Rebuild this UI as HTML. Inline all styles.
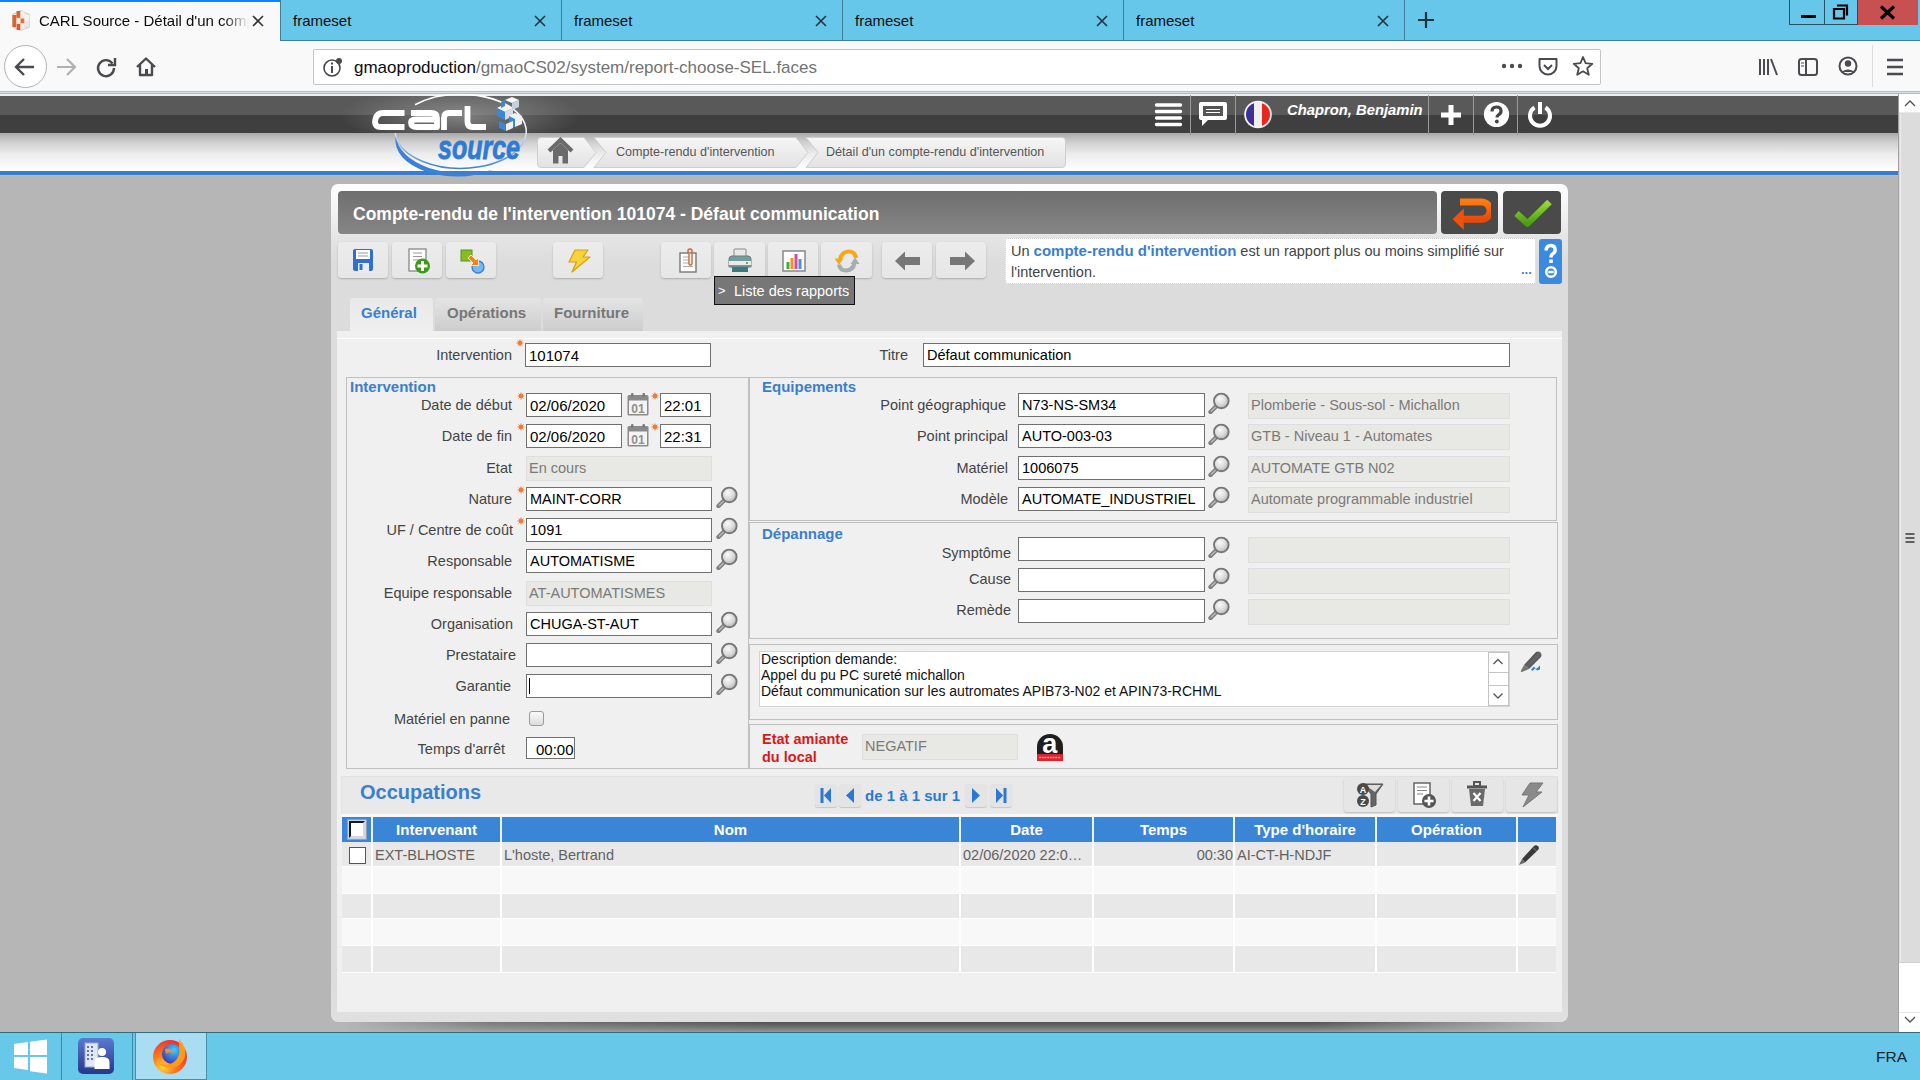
<!DOCTYPE html>
<html><head><meta charset="utf-8">
<style>
*{box-sizing:border-box;margin:0;padding:0}
html,body{width:1920px;height:1080px;overflow:hidden;font-family:"Liberation Sans",sans-serif;background:#b6b6b6;position:relative}
.a{position:absolute}
/* tab bar */
#tabbar{left:0;top:0;width:1920px;height:41px;background:#67c7ea}
.tab{top:0;height:40px;border-left:1px solid #3a8aa8;}
.tabtxt{top:12px;font-size:15px;color:#0c0c0d;white-space:nowrap}
.xclose{width:14px;height:14px}
#toolbar{left:0;top:41px;width:1920px;height:50px;background:#f9f9fa}
.tb{position:absolute;top:242px;height:36px;border-radius:4px;background:linear-gradient(#ececec,#e6e6e6);box-shadow:0 1px 2px rgba(0,0,0,.22)}
.tb svg{position:absolute;left:13px;top:6px}
.lbl{white-space:nowrap;line-height:17px}
.inp{background:#fff;border:1px solid #707070}
.inro{background:#e8e8e4;border:1px solid #dedede}
.intx{white-space:nowrap;color:#000;line-height:17px}
.fs{border:1px solid #c0c0c0}
.legend{font-size:15px;font-weight:bold;color:#3a7fce;line-height:17px}
</style></head>
<body>
<!-- ===== BROWSER CHROME ===== -->
<div id="tabbar" class="a">
  <div class="a" style="left:0;top:40px;width:1920px;height:1px;background:#3d7f99"></div>
  <div class="a" style="left:0;top:0;width:280px;height:41px;background:#f9f9fa"></div>
  <div class="a" style="left:0;top:0;width:280px;height:2px;background:#0a84ff"></div>
  <!-- favicon -->
  <svg class="a" style="left:12px;top:10px" width="18" height="21" viewBox="0 0 18 21">
    <path d="M0.5 4.5L8.5 0.5L17.5 4.5V17L8.5 20.5L0.5 17Z" fill="#f0e6e0" stroke="#c8c0bc" stroke-width=".8"/>
    <rect x="0.5" y="5" width="4" height="6" fill="#e0622a"/><rect x="0.5" y="11" width="4" height="6" fill="#e0622a"/>
    <rect x="4.5" y="1" width="4" height="7" fill="#e0622a"/><rect x="4.5" y="8" width="4" height="6" fill="#f4e8e0"/><rect x="4.5" y="14" width="4" height="6" fill="#e0582a"/>
    <rect x="8.5" y="1.5" width="4" height="7" fill="#f6f2ee"/><rect x="8.5" y="8.5" width="4" height="5" fill="#e2703a"/><rect x="8.5" y="13.5" width="4" height="6" fill="#f2ece8"/>
    <rect x="12.5" y="5" width="5" height="6" fill="#f2f2f2"/><rect x="12.5" y="11" width="5" height="6" fill="#e8e8ec"/>
    <path d="M4.5 14V20M8.5 8V14M4.5 8L8.5 8" stroke="#d9c2b2" stroke-width=".6"/>
  </svg>
  <div class="a tabtxt" style="left:39px;width:210px;overflow:hidden;-webkit-mask-image:linear-gradient(90deg,#000 88%,transparent)">CARL Source - Détail d'un compte-rendu</div>
  <svg class="a xclose" style="left:251px;top:14px" viewBox="0 0 14 14"><path d="M2 2L12 12M12 2L2 12" stroke="#333" stroke-width="1.6"/></svg>
  <!-- inactive tabs -->
  <div class="a" style="left:280px;top:0;width:1px;height:40px;background:#3d7f99"></div>
  <div class="a tabtxt" style="left:293px">frameset</div>
  <svg class="a xclose" style="left:533px;top:14px" viewBox="0 0 14 14"><path d="M2 2L12 12M12 2L2 12" stroke="#1a3440" stroke-width="1.6"/></svg>
  <div class="a" style="left:561px;top:0;width:1px;height:40px;background:#3d7f99"></div>
  <div class="a tabtxt" style="left:574px">frameset</div>
  <svg class="a xclose" style="left:814px;top:14px" viewBox="0 0 14 14"><path d="M2 2L12 12M12 2L2 12" stroke="#1a3440" stroke-width="1.6"/></svg>
  <div class="a" style="left:842px;top:0;width:1px;height:40px;background:#3d7f99"></div>
  <div class="a tabtxt" style="left:855px">frameset</div>
  <svg class="a xclose" style="left:1095px;top:14px" viewBox="0 0 14 14"><path d="M2 2L12 12M12 2L2 12" stroke="#1a3440" stroke-width="1.6"/></svg>
  <div class="a" style="left:1123px;top:0;width:1px;height:40px;background:#3d7f99"></div>
  <div class="a tabtxt" style="left:1136px">frameset</div>
  <svg class="a xclose" style="left:1376px;top:14px" viewBox="0 0 14 14"><path d="M2 2L12 12M12 2L2 12" stroke="#1a3440" stroke-width="1.6"/></svg>
  <div class="a" style="left:1404px;top:0;width:1px;height:40px;background:#3d7f99"></div>
  <svg class="a" style="left:1416px;top:10px" width="20" height="20" viewBox="0 0 20 20"><path d="M10 2V18M2 10H18" stroke="#1a3440" stroke-width="2.2"/></svg>
  <!-- window controls -->
  <div class="a" style="left:1789px;top:0;width:36px;height:25px;border:1px solid #2b4f5e;border-top:none;"></div>
  <div class="a" style="left:1801px;top:15px;width:15px;height:3px;background:#000"></div>
  <div class="a" style="left:1824px;top:0;width:34px;height:25px;border:1px solid #2b4f5e;border-top:none;border-left:none"></div>
  <svg class="a" style="left:1832px;top:4px" width="18" height="16" viewBox="0 0 18 16"><path d="M5 1.5H15V11.5M2 5H12V14.5H2Z" fill="none" stroke="#000" stroke-width="2.2"/></svg>
  <div class="a" style="left:1858px;top:0;width:60px;height:25px;background:#c75050"></div>
  <svg class="a" style="left:1879px;top:5px" width="17" height="15" viewBox="0 0 17 15"><path d="M2 1.5L15 13.5M15 1.5L2 13.5" stroke="#000" stroke-width="3.2"/></svg>
</div>
<div id="toolbar" class="a">
  <div class="a" style="left:4px;top:4px;width:43px;height:43px;border-radius:50%;border:1.3px solid #b1b1b3;background:#fff"></div>
  <svg class="a" style="left:13px;top:14px" width="24" height="24" viewBox="0 0 24 24"><path d="M3 12H21M11 4L3 12L11 20" fill="none" stroke="#4a4a4f" stroke-width="2.4"/></svg>
  <svg class="a" style="left:54px;top:14px" width="24" height="24" viewBox="0 0 24 24"><path d="M3 12H21M13 4L21 12L13 20" fill="none" stroke="#b1b1b3" stroke-width="2.2"/></svg>
  <svg class="a" style="left:94px;top:14px" width="24" height="24" viewBox="0 0 24 24"><path d="M18.5 8.5A8 8 0 1 0 20 13" fill="none" stroke="#4a4a4f" stroke-width="2.4"/><path d="M21 3V10H14" fill="none" stroke="#4a4a4f" stroke-width="2.4"/></svg>
  <svg class="a" style="left:134px;top:14px" width="24" height="24" viewBox="0 0 24 24"><path d="M3 12L12 3.5L21 12M6 9.5V20H18V9.5" fill="none" stroke="#4a4a4f" stroke-width="2.4" stroke-linejoin="round"/><rect x="11" y="14" width="3" height="6" fill="#4a4a4f"/></svg>
  <!-- url bar -->
  <div class="a" style="left:313px;top:8px;width:1288px;height:36px;background:#fff;border:1px solid #c4c4c6;border-radius:2px"></div>
  <svg class="a" style="left:321px;top:15px" width="24" height="24" viewBox="0 0 24 24"><circle cx="11" cy="12" r="8" fill="none" stroke="#4a4a4f" stroke-width="1.6"/><rect x="10" y="10" width="2" height="7" fill="#4a4a4f"/><rect x="10" y="6.5" width="2" height="2" fill="#4a4a4f"/><circle cx="18" cy="5" r="3" fill="#4a4a4f"/></svg>
  <div class="a" style="left:354px;top:17px;font-size:17px;color:#0c0c0d;white-space:nowrap">gmaoproduction<span style="color:#737373">/gmaoCS02/system/report-choose-SEL.faces</span></div>
  <svg class="a" style="left:1500px;top:18px" width="24" height="14" viewBox="0 0 24 14"><circle cx="4" cy="7" r="2.2" fill="#4a4a4f"/><circle cx="12" cy="7" r="2.2" fill="#4a4a4f"/><circle cx="20" cy="7" r="2.2" fill="#4a4a4f"/></svg>
  <svg class="a" style="left:1537px;top:15px" width="22" height="22" viewBox="0 0 22 22"><path d="M2.5 3H19.5V10A8.5 8.5 0 0 1 2.5 10Z" fill="none" stroke="#4a4a4f" stroke-width="2" stroke-linejoin="round"/><path d="M7 9L11 13L15 9" fill="none" stroke="#4a4a4f" stroke-width="2"/></svg>
  <svg class="a" style="left:1572px;top:14px" width="22" height="22" viewBox="0 0 22 22"><path d="M11 2L13.6 8.2L20.3 8.8L15.2 13.2L16.8 19.8L11 16.3L5.2 19.8L6.8 13.2L1.7 8.8L8.4 8.2Z" fill="none" stroke="#4a4a4f" stroke-width="1.8" stroke-linejoin="round"/></svg>
  <!-- right tools -->
  <svg class="a" style="left:1758px;top:15px" width="22" height="22" viewBox="0 0 22 22"><path d="M2 3V19M6 3V19M10 3V19M13 3L19 19" stroke="#4a4a4f" stroke-width="2"/></svg>
  <svg class="a" style="left:1797px;top:15px" width="22" height="22" viewBox="0 0 22 22"><rect x="2" y="3" width="18" height="16" rx="2.5" fill="none" stroke="#4a4a4f" stroke-width="2"/><path d="M9 3V19" stroke="#4a4a4f" stroke-width="2"/><path d="M4 7H7M4 10H7" stroke="#4a4a4f" stroke-width="1.2"/></svg>
  <svg class="a" style="left:1837px;top:14px" width="22" height="22" viewBox="0 0 22 22"><circle cx="11" cy="11" r="8.5" fill="none" stroke="#4a4a4f" stroke-width="2"/><circle cx="11" cy="8.5" r="3.2" fill="#4a4a4f"/><path d="M5 17A7 5 0 0 1 17 17" fill="#4a4a4f"/></svg>
  <div class="a" style="left:1872px;top:4px;width:1px;height:42px;background:#dcdcdc"></div>
  <svg class="a" style="left:1884px;top:15px" width="22" height="22" viewBox="0 0 22 22"><path d="M3 4H19M3 11H19M3 18H19" stroke="#4a4a4f" stroke-width="2.4"/></svg>
</div>
<div class="a" style="left:0;top:91px;width:1920px;height:1px;background:#a3c1d0"></div>
<div class="a" style="left:0;top:92px;width:1920px;height:1px;background:#d6e0e6"></div>
<div class="a" style="left:0;top:93px;width:1920px;height:1px;background:#b8b8b8"></div>
<div class="a" style="left:0;top:94px;width:1920px;height:2px;background:#f0eeec"></div>

<!-- ===== CARL HEADER ===== -->
<div class="a" style="left:0;top:96px;width:1898px;height:19px;background:#595959"></div>
<div class="a" style="left:0;top:115px;width:1898px;height:18px;background:#3f3f3f"></div>
<div class="a" style="left:0;top:133px;width:1898px;height:38px;background:linear-gradient(#a9a9a9 0%,#d0d0d0 25%,#ececec 55%,#f7f7f7 80%,#fff 100%)"></div>
<div class="a" style="left:0;top:171px;width:1898px;height:4px;background:#3a7dcc"></div>
<div class="a" style="left:0;top:175px;width:1898px;height:1px;background:#a8bcd2"></div>


<!-- header right icons -->
<div class="a" style="left:1145px;top:96px;width:420px;height:37px;"></div>
<div class="a" style="left:1190px;top:95px;width:1px;height:40px;background:#9a9a9a"></div>
<div class="a" style="left:1235px;top:95px;width:1px;height:40px;background:#9a9a9a"></div>
<div class="a" style="left:1428px;top:95px;width:1px;height:40px;background:#9a9a9a"></div>
<div class="a" style="left:1473px;top:95px;width:1px;height:40px;background:#9a9a9a"></div>
<div class="a" style="left:1517px;top:95px;width:1px;height:40px;background:#9a9a9a"></div>
<svg class="a" style="left:1154px;top:102px" width="30" height="25" viewBox="0 0 30 25"><path d="M2.5 3H26.5M2.5 9.5H26.5M2.5 16H26.5M2.5 22.5H26.5" stroke="#fff" stroke-width="3.4" stroke-linecap="round"/></svg>
<svg class="a" style="left:1198px;top:100px" width="30" height="30" viewBox="0 0 30 30"><path d="M3 2H27Q29 2 29 4V18Q29 20 27 20H10L4 26V20H3Q1 20 1 18V4Q1 2 3 2Z" fill="#fff"/><rect x="5" y="6" width="20" height="10" fill="#555"/><path d="M8 9.5H22M8 12.5H22" stroke="#fff" stroke-width="1.2"/></svg>
<svg class="a" style="left:1243px;top:100px" width="30" height="30" viewBox="0 0 30 30"><defs><clipPath id="fc"><circle cx="15" cy="14.5" r="12"/></clipPath></defs><circle cx="15" cy="14.5" r="13.8" fill="#f4f4f4"/><g clip-path="url(#fc)"><rect x="0" y="0" width="11" height="30" fill="#3b2f9c"/><rect x="11" y="0" width="8" height="30" fill="#efefef"/><rect x="19" y="0" width="12" height="30" fill="#e8261c"/></g></svg>
<div class="a" style="left:1287px;top:102px;font-size:14.8px;font-weight:bold;font-style:italic;color:#fff;white-space:nowrap">Chapron, Benjamin</div>
<svg class="a" style="left:1440px;top:104px" width="22" height="22" viewBox="0 0 22 22"><path d="M11 1V21M1 11H21" stroke="#fff" stroke-width="5"/></svg>
<svg class="a" style="left:1483px;top:101px" width="27" height="27" viewBox="0 0 27 27"><circle cx="13.5" cy="13.5" r="12.6" fill="#fff"/><path d="M9 10.5Q9 6 13.5 6Q18 6 18 10Q18 12.5 15.5 13.8Q14 14.6 14 16.5" fill="none" stroke="#444" stroke-width="3.2"/><circle cx="13.8" cy="20.5" r="1.9" fill="#444"/></svg>
<svg class="a" style="left:1526px;top:101px" width="28" height="28" viewBox="0 0 28 28"><path d="M8.5 6.5A10 10 0 1 0 19.5 6.5" fill="none" stroke="#fff" stroke-width="4"/><path d="M14 1V13" stroke="#fff" stroke-width="4"/></svg>

<!-- logo -->
<div class="a" style="left:330px;top:96px;width:260px;height:37px;background:radial-gradient(ellipse 120px 30px at 130px 20px,rgba(150,150,150,.75),rgba(120,120,120,0) 100%)"></div>
<svg class="a" style="left:365px;top:94px" width="175" height="90" viewBox="0 0 175 90">
  <defs>
    <linearGradient id="eg" x1="0" y1="0" x2="1" y2="1"><stop offset="0" stop-color="#fff" stop-opacity="0"/><stop offset="0.3" stop-color="#fff" stop-opacity=".9"/><stop offset="0.55" stop-color="#e8eef6"/><stop offset="0.75" stop-color="#6aa0e0"/><stop offset="1" stop-color="#3a82d6"/></linearGradient>
    <linearGradient id="eg2" x1="0" y1="0" x2="0" y2="1"><stop offset="0" stop-color="#fff"/><stop offset="0.45" stop-color="#f4f4f4"/><stop offset="0.7" stop-color="#9cc0ea"/><stop offset="1" stop-color="#3a82d6"/></linearGradient>
    <radialGradient id="eglow" cx="0.5" cy="0.5" r="0.5"><stop offset="0" stop-color="#9a9a9a" stop-opacity=".0"/><stop offset="1" stop-color="#888" stop-opacity="0"/></radialGradient>
  </defs>
  <path d="M50 10.8 A65.5 37 0 1 1 30.3 39" fill="none" stroke="url(#eg2)" stroke-width="1.6"/>
  <path d="M30.5 42 Q28 66 62 78 Q96 88 128 76 Q96 84 64 74 Q34 63 30.5 42Z" fill="#3a82d6"/>
  <g fill="none" stroke="#fff" stroke-width="5.8" stroke-linejoin="round">
    <path d="M39.5 19H18Q12 19 10.5 25L10 28Q10 33 16 33H39.5"/>
    <path d="M46 19H66Q72 19 72 24V33H52Q46 33 46 28.5Q46 25.5 52 25.5H71"/>
    <path d="M79 36V24Q79 19 84 19H97"/>
    <path d="M102.5 12V28Q102.5 33 107.5 33H121"/>
  </g>
  <g>
    <path d="M132 14L140 10L148 14L140 18Z" fill="#f2f2f2"/>
    <path d="M132 14L140 18V26L132 22Z" fill="#3a86da"/>
    <path d="M140 18L148 14V22L140 26Z" fill="#d6dde6"/>
    <path d="M140 6L147 3L154 6L147 9Z" fill="#f6f6f6"/>
    <path d="M147 9L154 6V13L147 16Z" fill="#c8d0da"/>
    <path d="M144 22L150 19L157 22V30L150 33L144 30Z" fill="#eef2f6"/>
    <path d="M144 22L150 25V33L144 30Z" fill="#3a86da"/>
    <path d="M134 27L141 30V37L134 34Z" fill="#3a86da"/>
    <path d="M141 30L148 27V34L141 37Z" fill="#f0f0f0"/>
    <path d="M136 8L140 6V12L136 14Z" fill="#3a86da"/>
  </g>
  <text x="73" y="65" font-family="Liberation Sans" font-weight="bold" font-style="italic" font-size="33" fill="#2f7ad3" stroke="#2f7ad3" stroke-width="0.8" textLength="82" lengthAdjust="spacingAndGlyphs">source</text>
</svg>

<!-- breadcrumb -->
<svg class="a" style="left:536px;top:136px" width="532" height="34" viewBox="0 0 532 34">
  <defs><linearGradient id="bg1" x1="0" y1="0" x2="0" y2="1"><stop offset="0" stop-color="#f6f6f6"/><stop offset="1" stop-color="#e2e2e2"/></linearGradient></defs>
  <path d="M1.5 5Q1.5 1.5 5 1.5H48L60 16.5L48 31.5H5Q1.5 31.5 1.5 28Z" fill="url(#bg1)" stroke="#cfcfcf"/>
  <path d="M58 1.5H260L272 16.5L260 31.5H58L70 16.5Z" fill="url(#bg1)" stroke="#cfcfcf"/>
  <path d="M270 1.5H526Q529.5 1.5 529.5 5V28Q529.5 31.5 526 31.5H270L282 16.5Z" fill="url(#bg1)" stroke="#cfcfcf"/>
  <path d="M13 15L24.5 4L36 15" fill="none" stroke="#6a6a6a" stroke-width="4.2" stroke-linejoin="miter"/>
  <path d="M17 14V27.5H22.5V20H26.5V27.5H32V14L24.5 7Z" fill="#6a6a6a"/>
</svg>
<div class="a" style="left:616px;top:145px;font-size:12.6px;color:#555;white-space:nowrap">Compte-rendu d'intervention</div>
<div class="a" style="left:826px;top:145px;font-size:12.6px;color:#555;white-space:nowrap">Détail d'un compte-rendu d'intervention</div>


<!-- ===== MAIN PANEL ===== -->
<div class="a" style="left:331px;top:184px;width:1237px;height:838px;border-radius:7px;background:linear-gradient(#fff 0px,#f6f6f6 20px,#e4e4e4 55px,#dcdcdc 80px,#dcdcdc 800px,#e0e0e0 838px)"></div>
<div class="a" style="left:345px;top:1022px;width:1210px;height:10px;background:linear-gradient(rgba(20,20,20,.62),rgba(40,40,40,.45) 60%,rgba(60,60,80,.25));-webkit-mask-image:linear-gradient(90deg,transparent,rgba(0,0,0,.6) 12%,#000 35%,#000 80%,transparent)"></div>

<!-- title bar -->
<div class="a" style="left:338px;top:191px;width:1099px;height:43px;border-radius:4px;background:linear-gradient(#6f6f6f,#7a7a7a 50%,#868686)"></div>
<div class="a" style="left:353px;top:204px;font-size:17.5px;font-weight:bold;color:#fff;white-space:nowrap">Compte-rendu de l'intervention 101074 - Défaut communication</div>
<div class="a" style="left:1441px;top:191px;width:57px;height:43px;border-radius:4px;background:#4a4a4a"></div>
<div class="a" style="left:1503px;top:191px;width:58px;height:43px;border-radius:4px;background:#4a4a4a"></div>
<svg class="a" style="left:1449px;top:196px" width="42" height="36" viewBox="0 0 42 36"><defs><linearGradient id="arg" x1="0" y1="0" x2="0" y2="1"><stop offset="0" stop-color="#ff7a10"/><stop offset="1" stop-color="#e84a08"/></linearGradient></defs><path d="M11 6H32.5A8.6 8.6 0 0 1 32.5 23.2H13" fill="none" stroke="url(#arg)" stroke-width="7"/><path d="M3.6 23.2L14.8 12.3V34Z" fill="#ec5208"/></svg>
<svg class="a" style="left:1510px;top:195px" width="44" height="36" viewBox="0 0 44 36"><defs><linearGradient id="ckg" x1="0" y1="0" x2="0" y2="1"><stop offset="0" stop-color="#9ad83a"/><stop offset="1" stop-color="#4a9e14"/></linearGradient></defs><path d="M6.5 18.5L17.5 28.5L39.5 7" fill="none" stroke="url(#ckg)" stroke-width="6.5" stroke-linejoin="round"/></svg>


<!-- toolbar -->
<div class="tb" style="left:338px;width:50px"><svg width="24" height="24" viewBox="0 0 24 24"><path d="M2 3Q2 1 4 1H20Q22 1 22 3V21Q22 23 20 23H4Q2 23 2 21Z" fill="#2f6fd0"/><rect x="5" y="2" width="14" height="9" fill="#fff"/><path d="M7 5H17M7 8H17" stroke="#999" stroke-width="1.2"/><rect x="7" y="15" width="11" height="8" fill="#e8eef8"/><rect x="8.5" y="16" width="3" height="6" fill="#2f6fd0"/></svg></div>
<div class="tb" style="left:392px;width:50px"><svg width="26" height="26" viewBox="0 0 26 26"><rect x="4" y="1" width="17" height="22" fill="#fff" stroke="#888" stroke-width="1.3"/><path d="M8 5H17M8 8.5H17M8 12H14" stroke="#999" stroke-width="1.2"/><circle cx="17.5" cy="18" r="7.5" fill="#3d9a18"/><path d="M17.5 13V23M12.5 18H22.5" stroke="#fff" stroke-width="3"/></svg></div>
<div class="tb" style="left:446px;width:50px"><svg width="26" height="26" viewBox="0 0 26 26"><rect x="2" y="2" width="11" height="11" fill="#8dba1e" stroke="#4a9a20"/><circle cx="19" cy="19" r="6" fill="#78b8f0" stroke="#3a7ad8" stroke-width="1.3"/><path d="M9 10L14 15L11.5 17.5H19.5V9.5L17 12L12 7Z" fill="#f7820d" stroke="#fff" stroke-width=".8"/></svg></div>
<div class="tb" style="left:553px;width:50px"><svg width="26" height="26" viewBox="0 0 26 26"><path d="M9 2H22L17 9H24L6 24L10.5 14H3Z" fill="#f7d23a" stroke="#d9a010" stroke-width="1.2" stroke-linejoin="round"/></svg></div>
<div class="tb" style="left:661px;width:50px"><svg width="26" height="26" viewBox="0 0 26 26"><rect x="6" y="5" width="16" height="19" fill="#fff" stroke="#777" stroke-width="1.4"/><path d="M9 9H15M9 12H15M9 15H15M9 18.5H19" stroke="#aaa" stroke-width="1"/><path d="M14 6V2.5Q14 1 16 1Q18 1 18 3V15Q18 17 16.5 17Q15 17 15 15V6" fill="none" stroke="#e0602a" stroke-width="1.4"/></svg></div>
<div class="tb" style="left:714px;width:51px"><svg width="26" height="26" viewBox="0 0 26 26"><rect x="7" y="1" width="12" height="8" rx="1" fill="#e8e8e8" stroke="#888"/><path d="M2 11Q2 8 5 8H21Q24 8 24 11V19H2Z" fill="#6fa0a0" stroke="#777"/><rect x="2" y="13" width="22" height="4" fill="#eaeaea"/><rect x="5" y="19" width="16" height="5" fill="#3f7878"/><circle cx="20" cy="15" r="1" fill="#2a2"/></svg></div>
<div class="tb" style="left:768px;width:50px"><svg width="26" height="26" viewBox="0 0 26 26"><rect x="2" y="3" width="22" height="20" fill="#fff" stroke="#888" stroke-width="1.5"/><rect x="5.5" y="14" width="3" height="7" fill="#3ab03a"/><rect x="9.5" y="10" width="3" height="11" fill="#f7921e"/><rect x="13.5" y="6" width="3" height="15" fill="#d84a9a"/><rect x="17.5" y="11" width="3" height="10" fill="#4a90e0"/></svg></div>
<div class="tb" style="left:821px;width:51px"><svg width="26" height="26" viewBox="0 0 26 26"><path d="M6 11Q8 3.5 15 3.5Q21 3.5 22 10" fill="none" stroke="#f2aa1a" stroke-width="4.2"/><path d="M0.5 10.5L9.5 10.5L5 17Z" fill="#f2aa1a"/><path d="M20.5 15Q19 22.5 12 22.5Q6 22.5 5 16.5" fill="none" stroke="#a4aeae" stroke-width="4.2"/><path d="M25.5 16L16.5 16L21 9.5Z" fill="#a4aeae"/></svg></div>
<div class="tb" style="left:882px;width:50px"><svg width="26" height="26" viewBox="0 0 26 26"><path d="M0 13L10 3.5V9H25V17H10V22.5Z" fill="#777"/></svg></div>
<div class="tb" style="left:936px;width:50px"><svg width="26" height="26" viewBox="0 0 26 26"><path d="M26 13L16 3.5V9H1V17H16V22.5Z" fill="#777"/></svg></div>
<!-- tooltip -->
<div class="a" style="left:714px;top:276px;width:141px;height:29px;background:#777;border:1.5px solid #111"></div>
<div class="a" style="left:718px;top:283px;font-size:13px;color:#fff;white-space:nowrap">&gt;</div>
<div class="a" style="left:734px;top:283px;font-size:14.5px;color:#fff;white-space:nowrap">Liste des rapports</div>
<!-- help box -->
<div class="a" style="left:1005px;top:238px;width:531px;height:46px;background:#fff;border:1px dotted #c8c8c8;border-radius:3px"></div>
<div class="a" style="left:1011px;top:240px;width:525px;font-size:14.5px;line-height:21px;color:#444;white-space:nowrap">Un <b style="color:#3a7fce;font-size:15px">compte-rendu d'intervention</b> est un rapport plus ou moins simplifié sur<br>l'intervention.</div>
<div class="a" style="left:1521px;top:262px;font-size:13px;font-weight:bold;color:#3a7fce">...</div>
<div class="a" style="left:1539px;top:239px;width:23px;height:45px;border-radius:3px;background:#3a8ae0"></div>
<svg class="a" style="left:1542px;top:242px" width="17" height="40" viewBox="0 0 17 40"><path d="M4.2 8.5Q4.2 3.5 8.7 3.5Q13.2 3.5 13.2 8Q13.2 10.5 10.8 11.8Q9 12.8 9 15.5" fill="none" stroke="#fff" stroke-width="3.4"/><rect x="7.2" y="17.5" width="3.6" height="3.4" fill="#fff"/><circle cx="9" cy="30" r="4.8" fill="none" stroke="#fff" stroke-width="2.6"/><path d="M6.3 30H11.7" stroke="#fff" stroke-width="2.4"/></svg>
<!-- tabs -->
<div class="a" style="left:350px;top:298px;width:83px;height:34px;border-radius:3px 3px 0 0;background:linear-gradient(#e9e9e9,#efefef)"></div>
<div class="a" style="left:435px;top:298px;width:106px;height:33px;border-radius:3px 3px 0 0;background:linear-gradient(#e4e4e4,#cdcdcd)"></div>
<div class="a" style="left:543px;top:298px;width:100px;height:33px;border-radius:3px 3px 0 0;background:linear-gradient(#e4e4e4,#cdcdcd)"></div>
<div class="a" style="left:361px;top:304px;font-size:15px;font-weight:bold;color:#3a7fce">Général</div>
<div class="a" style="left:447px;top:304px;font-size:15px;font-weight:bold;color:#777">Opérations</div>
<div class="a" style="left:554px;top:304px;font-size:15px;font-weight:bold;color:#777">Fourniture</div>
<!-- form area -->
<div class="a" style="left:337px;top:331px;width:1225px;height:445px;background:#f0f0f0"></div>
<div class="a" style="left:337px;top:338px;width:1225px;height:1px;background:#fff"></div>

<!-- FORM -->
<svg width="0" height="0" style="position:absolute"><defs>
<radialGradient id="lens" cx="0.4" cy="0.35" r="0.7"><stop offset="0" stop-color="#fafafa"/><stop offset="0.6" stop-color="#d8d8d8"/><stop offset="1" stop-color="#b0b0b0"/></radialGradient>
<g id="mag"><path d="M4.5 22L10.5 16" stroke="#808080" stroke-width="4.4" stroke-linecap="round"/><path d="M5 21.5L10 16.5" stroke="#b8b8b8" stroke-width="1.4"/><circle cx="15.3" cy="10.9" r="7.3" fill="url(#lens)" stroke="#767676" stroke-width="1.9"/></g>
<g id="cal"><rect x="0.5" y="2" width="21" height="20.5" rx="1.5" fill="#8a8a8a"/><rect x="2" y="7.5" width="18" height="13.5" fill="#f4f4f4"/><rect x="4" y="0" width="2.5" height="4" rx="1" fill="#7a7a7a"/><rect x="15.5" y="0" width="2.5" height="4" rx="1" fill="#7a7a7a"/><text x="11" y="19.5" text-anchor="middle" font-family="Liberation Sans" font-weight="bold" font-size="12" fill="#8e8e8e">01</text></g>
</defs></svg>
<div class="a lbl" style="right:1408px;top:347px;font-size:14.5px;color:#444;">Intervention</div>
<svg class="a" style="left:516px;top:339px" width="8" height="8" viewBox="0 0 8 8"><circle cx="4" cy="4" r="2.4" fill="#f07a3a"/><path d="M4 0.3V7.7M0.3 4H7.7M1.4 1.4L6.6 6.6M6.6 1.4L1.4 6.6" stroke="#f07a3a" stroke-width="0.9" opacity="0.8"/></svg>
<div class="a inp" style="left:525px;top:343px;width:186px;height:24px"></div>
<div class="a intx" style="left:529px;top:347px;font-size:15px">101074</div>
<div class="a lbl" style="right:1012px;top:347px;font-size:14.5px;color:#444;">Titre</div>
<div class="a inp" style="left:923px;top:343px;width:587px;height:24px"></div>
<div class="a intx" style="left:927px;top:347px;font-size:14.5px">Défaut communication</div>
<div class="a fs" style="left:346px;top:377px;width:403px;height:392px"></div>
<div class="a fs" style="left:749px;top:377px;width:808px;height:144px"></div>
<div class="a fs" style="left:749px;top:522px;width:809px;height:117px"></div>
<div class="a fs" style="left:749px;top:644px;width:809px;height:76px"></div>
<div class="a fs" style="left:749px;top:724px;width:809px;height:45px"></div>
<div class="a legend" style="left:350px;top:378px">Intervention</div>
<div class="a legend" style="left:762px;top:378px">Equipements</div>
<div class="a legend" style="left:762px;top:525px">Dépannage</div>
<div class="a lbl" style="right:1408px;top:397px;font-size:14.5px;color:#444;">Date de début</div>
<svg class="a" style="left:517px;top:392px" width="8" height="8" viewBox="0 0 8 8"><circle cx="4" cy="4" r="2.4" fill="#f07a3a"/><path d="M4 0.3V7.7M0.3 4H7.7M1.4 1.4L6.6 6.6M6.6 1.4L1.4 6.6" stroke="#f07a3a" stroke-width="0.9" opacity="0.8"/></svg>
<div class="a inp" style="left:526px;top:393px;width:96px;height:24px"></div>
<div class="a intx" style="left:530px;top:397px;font-size:15px">02/06/2020</div>
<svg class="a" style="left:627px;top:393px" width="22" height="23" viewBox="0 0 22 23"><use href="#cal"/></svg>
<svg class="a" style="left:651px;top:392px" width="8" height="8" viewBox="0 0 8 8"><circle cx="4" cy="4" r="2.4" fill="#f07a3a"/><path d="M4 0.3V7.7M0.3 4H7.7M1.4 1.4L6.6 6.6M6.6 1.4L1.4 6.6" stroke="#f07a3a" stroke-width="0.9" opacity="0.8"/></svg>
<div class="a inp" style="left:660px;top:393px;width:51px;height:24px"></div>
<div class="a intx" style="left:664px;top:397px;font-size:15px">22:01</div>
<div class="a lbl" style="right:1408px;top:428px;font-size:14.5px;color:#444;">Date de fin</div>
<svg class="a" style="left:517px;top:423px" width="8" height="8" viewBox="0 0 8 8"><circle cx="4" cy="4" r="2.4" fill="#f07a3a"/><path d="M4 0.3V7.7M0.3 4H7.7M1.4 1.4L6.6 6.6M6.6 1.4L1.4 6.6" stroke="#f07a3a" stroke-width="0.9" opacity="0.8"/></svg>
<div class="a inp" style="left:526px;top:424px;width:96px;height:24px"></div>
<div class="a intx" style="left:530px;top:428px;font-size:15px">02/06/2020</div>
<svg class="a" style="left:627px;top:424px" width="22" height="23" viewBox="0 0 22 23"><use href="#cal"/></svg>
<svg class="a" style="left:651px;top:423px" width="8" height="8" viewBox="0 0 8 8"><circle cx="4" cy="4" r="2.4" fill="#f07a3a"/><path d="M4 0.3V7.7M0.3 4H7.7M1.4 1.4L6.6 6.6M6.6 1.4L1.4 6.6" stroke="#f07a3a" stroke-width="0.9" opacity="0.8"/></svg>
<div class="a inp" style="left:660px;top:424px;width:51px;height:24px"></div>
<div class="a intx" style="left:664px;top:428px;font-size:15px">22:31</div>
<div class="a lbl" style="right:1408px;top:460px;font-size:14.5px;color:#444;">Etat</div>
<div class="a inro" style="left:526px;top:456px;width:186px;height:25px"></div>
<div class="a intx" style="left:529px;top:460px;color:#7a7a7a;font-size:14.5px">En cours</div>
<div class="a lbl" style="right:1408px;top:491px;font-size:14.5px;color:#444;">Nature</div>
<svg class="a" style="left:517px;top:486px" width="8" height="8" viewBox="0 0 8 8"><circle cx="4" cy="4" r="2.4" fill="#f07a3a"/><path d="M4 0.3V7.7M0.3 4H7.7M1.4 1.4L6.6 6.6M6.6 1.4L1.4 6.6" stroke="#f07a3a" stroke-width="0.9" opacity="0.8"/></svg>
<div class="a inp" style="left:526px;top:487px;width:186px;height:24px"></div>
<div class="a intx" style="left:530px;top:491px;font-size:14.5px">MAINT-CORR</div>
<svg class="a" style="left:714px;top:484px" width="24" height="24" viewBox="0 0 24 24"><use href="#mag"/></svg>
<div class="a lbl" style="right:1407px;top:522px;font-size:14.5px;color:#444;">UF / Centre de coût</div>
<svg class="a" style="left:517px;top:517px" width="8" height="8" viewBox="0 0 8 8"><circle cx="4" cy="4" r="2.4" fill="#f07a3a"/><path d="M4 0.3V7.7M0.3 4H7.7M1.4 1.4L6.6 6.6M6.6 1.4L1.4 6.6" stroke="#f07a3a" stroke-width="0.9" opacity="0.8"/></svg>
<div class="a inp" style="left:526px;top:518px;width:186px;height:24px"></div>
<div class="a intx" style="left:530px;top:522px;font-size:14.5px">1091</div>
<svg class="a" style="left:714px;top:515px" width="24" height="24" viewBox="0 0 24 24"><use href="#mag"/></svg>
<div class="a lbl" style="right:1408px;top:553px;font-size:14.5px;color:#444;">Responsable</div>
<div class="a inp" style="left:526px;top:549px;width:186px;height:24px"></div>
<div class="a intx" style="left:530px;top:553px;font-size:14.5px">AUTOMATISME</div>
<svg class="a" style="left:714px;top:546px" width="24" height="24" viewBox="0 0 24 24"><use href="#mag"/></svg>
<div class="a lbl" style="right:1408px;top:585px;font-size:14.5px;color:#444;">Equipe responsable</div>
<div class="a inro" style="left:526px;top:581px;width:186px;height:25px"></div>
<div class="a intx" style="left:529px;top:585px;color:#7a7a7a;font-size:14.5px">AT-AUTOMATISMES</div>
<div class="a lbl" style="right:1407px;top:616px;font-size:14.5px;color:#444;">Organisation</div>
<div class="a inp" style="left:526px;top:612px;width:186px;height:24px"></div>
<div class="a intx" style="left:530px;top:616px;font-size:14.5px">CHUGA-ST-AUT</div>
<svg class="a" style="left:714px;top:609px" width="24" height="24" viewBox="0 0 24 24"><use href="#mag"/></svg>
<div class="a lbl" style="right:1404px;top:647px;font-size:14.5px;color:#444;">Prestataire</div>
<div class="a inp" style="left:526px;top:643px;width:186px;height:24px"></div>
<svg class="a" style="left:714px;top:640px" width="24" height="24" viewBox="0 0 24 24"><use href="#mag"/></svg>
<div class="a lbl" style="right:1409px;top:678px;font-size:14.5px;color:#444;">Garantie</div>
<div class="a inp" style="left:526px;top:674px;width:186px;height:24px"></div>
<svg class="a" style="left:714px;top:671px" width="24" height="24" viewBox="0 0 24 24"><use href="#mag"/></svg>
<div class="a" style="left:529px;top:678px;width:1px;height:16px;background:#000"></div>
<div class="a lbl" style="right:1410px;top:711px;font-size:14.5px;color:#444;">Matériel en panne</div>
<div class="a" style="left:529px;top:711px;width:15px;height:15px;border:1px solid #9a9a9a;border-radius:3px;background:linear-gradient(#fafafa,#dcdcdc)"></div>
<div class="a lbl" style="right:1415px;top:741px;font-size:14.5px;color:#444;">Temps d'arrêt</div>
<div class="a inp" style="left:526px;top:737px;width:49px;height:22px"></div>
<div class="a intx" style="left:536px;top:741px;font-size:15px">00:00</div>
<div class="a lbl" style="right:914px;top:397px;font-size:14.5px;color:#444;">Point géographique</div>
<div class="a inp" style="left:1018px;top:393px;width:187px;height:24px"></div>
<div class="a intx" style="left:1022px;top:397px;font-size:14.5px">N73-NS-SM34</div>
<svg class="a" style="left:1206px;top:390px" width="24" height="24" viewBox="0 0 24 24"><use href="#mag"/></svg>
<div class="a inro" style="left:1248px;top:393px;width:262px;height:26px"></div>
<div class="a intx" style="left:1251px;top:397px;color:#7a7a7a;font-size:14.5px">Plomberie - Sous-sol - Michallon</div>
<div class="a lbl" style="right:912px;top:428px;font-size:14.5px;color:#444;">Point principal</div>
<div class="a inp" style="left:1018px;top:424px;width:187px;height:24px"></div>
<div class="a intx" style="left:1022px;top:428px;font-size:14.5px">AUTO-003-03</div>
<svg class="a" style="left:1206px;top:421px" width="24" height="24" viewBox="0 0 24 24"><use href="#mag"/></svg>
<div class="a inro" style="left:1248px;top:424px;width:262px;height:26px"></div>
<div class="a intx" style="left:1251px;top:428px;color:#7a7a7a;font-size:14.5px">GTB - Niveau 1 - Automates</div>
<div class="a lbl" style="right:912px;top:460px;font-size:14.5px;color:#444;">Matériel</div>
<div class="a inp" style="left:1018px;top:456px;width:187px;height:24px"></div>
<div class="a intx" style="left:1022px;top:460px;font-size:14.5px">1006075</div>
<svg class="a" style="left:1206px;top:453px" width="24" height="24" viewBox="0 0 24 24"><use href="#mag"/></svg>
<div class="a inro" style="left:1248px;top:456px;width:262px;height:26px"></div>
<div class="a intx" style="left:1251px;top:460px;color:#7a7a7a;font-size:14.5px">AUTOMATE GTB N02</div>
<div class="a lbl" style="right:912px;top:491px;font-size:14.5px;color:#444;">Modèle</div>
<div class="a inp" style="left:1018px;top:487px;width:187px;height:24px"></div>
<div class="a intx" style="left:1022px;top:491px;font-size:14.5px">AUTOMATE_INDUSTRIEL</div>
<svg class="a" style="left:1206px;top:484px" width="24" height="24" viewBox="0 0 24 24"><use href="#mag"/></svg>
<div class="a inro" style="left:1248px;top:487px;width:262px;height:26px"></div>
<div class="a intx" style="left:1251px;top:491px;color:#7a7a7a;font-size:14.5px">Automate programmable industriel</div>
<div class="a lbl" style="right:909px;top:545px;font-size:14.5px;color:#444;">Symptôme</div>
<div class="a inp" style="left:1018px;top:537px;width:187px;height:24px"></div>
<svg class="a" style="left:1206px;top:534px" width="24" height="24" viewBox="0 0 24 24"><use href="#mag"/></svg>
<div class="a inro" style="left:1248px;top:537px;width:262px;height:26px"></div>
<div class="a lbl" style="right:909px;top:571px;font-size:14.5px;color:#444;">Cause</div>
<div class="a inp" style="left:1018px;top:568px;width:187px;height:24px"></div>
<svg class="a" style="left:1206px;top:565px" width="24" height="24" viewBox="0 0 24 24"><use href="#mag"/></svg>
<div class="a inro" style="left:1248px;top:568px;width:262px;height:26px"></div>
<div class="a lbl" style="right:909px;top:602px;font-size:14.5px;color:#444;">Remède</div>
<div class="a inp" style="left:1018px;top:599px;width:187px;height:24px"></div>
<svg class="a" style="left:1206px;top:596px" width="24" height="24" viewBox="0 0 24 24"><use href="#mag"/></svg>
<div class="a inro" style="left:1248px;top:599px;width:262px;height:26px"></div>
<div class="a" style="left:759px;top:651px;width:751px;height:56px;background:#fff;border:1px solid #d4d4d4"></div>
<div class="a" style="left:761px;top:651px;font-size:14px;line-height:16px;color:#111;white-space:nowrap">Description demande:<br>Appel du pu PC sureté michallon<br>Défaut communication sur les autromates APIB73-N02 et APIN73-RCHML</div>
<div class="a" style="left:1488px;top:652px;width:21px;height:54px;background:#fff;border:1px solid #c4c4c4"></div>
<div class="a" style="left:1488px;top:672px;width:21px;height:1px;background:#c4c4c4"></div>
<div class="a" style="left:1488px;top:685px;width:21px;height:1px;background:#c4c4c4"></div>
<svg class="a" style="left:1491px;top:656px" width="14" height="12" viewBox="0 0 14 12"><path d="M2.5 8L7 3.5L11.5 8" fill="none" stroke="#555" stroke-width="1.3"/></svg>
<svg class="a" style="left:1491px;top:690px" width="14" height="12" viewBox="0 0 14 12"><path d="M2.5 3.5L7 8L11.5 3.5" fill="none" stroke="#555" stroke-width="1.3"/></svg>
<svg class="a" style="left:1518px;top:649px" width="26" height="26" viewBox="0 0 26 26"><defs><linearGradient id="pg" x1="0" y1="0" x2="1" y2="1"><stop offset="0" stop-color="#222"/><stop offset=".5" stop-color="#666"/><stop offset="1" stop-color="#333"/></linearGradient></defs><path d="M6 16L17.5 3.5Q20 1.5 22.5 3.5Q24.5 6 22.5 8.5L11 20Z" fill="url(#pg)"/><path d="M6 16L11 20L4 23Q2.5 23 3 21.5Z" fill="#777"/><path d="M13 20.5L16 17.5L18 20L22 16.5V20.5L19 21.5L17 19.5L14.5 22Z" fill="#2a86d8"/></svg>
<div class="a" style="left:762px;top:731px;font-size:14.5px;line-height:17.5px;font-weight:bold;color:#d81a1a">Etat amiante<br>du local</div>
<div class="a inro" style="left:862px;top:734px;width:156px;height:26px"></div>
<div class="a intx" style="left:865px;top:738px;color:#7a7a7a;font-size:14.5px">NEGATIF</div>
<svg class="a" style="left:1037px;top:734px" width="26" height="27" viewBox="0 0 26 27"><path d="M0 12.5A13 12.5 0 0 1 26 12.5V27H0Z" fill="#1e1e1e"/><rect x="0" y="20" width="26" height="7" fill="#e0202a"/><path d="M2 23.5H24" stroke="#fff" stroke-width="1.6" stroke-dasharray="2 0.7" opacity=".55"/><text x="12.8" y="19" text-anchor="middle" font-family="Liberation Sans" font-weight="bold" font-size="27" fill="#fff">a</text></svg>
<!-- /FORM -->
<!-- OCC -->
<div class="a" style="left:337px;top:770px;width:1225px;height:242px;background:#f0f0f0"></div>
<div class="a" style="left:341px;top:776px;width:1217px;height:38px;background:#e9e9e9;border:1px solid #e2e2e2;border-bottom:none"></div>
<div class="a" style="left:341px;top:814px;width:1217px;height:3px;background:#f8f8f8"></div>
<div class="a" style="left:360px;top:781px;font-size:20px;font-weight:bold;color:#3a7fce;white-space:nowrap">Occupations</div>
<div class="a" style="left:815px;top:784px;width:22px;height:23px;border-radius:3px;background:#e4e4e4;box-shadow:0 1px 1px rgba(0,0,0,.15)"></div>
<div class="a" style="left:839px;top:784px;width:22px;height:23px;border-radius:3px;background:#e4e4e4;box-shadow:0 1px 1px rgba(0,0,0,.15)"></div>
<div class="a" style="left:965px;top:784px;width:22px;height:23px;border-radius:3px;background:#e4e4e4;box-shadow:0 1px 1px rgba(0,0,0,.15)"></div>
<div class="a" style="left:990px;top:784px;width:22px;height:23px;border-radius:3px;background:#e4e4e4;box-shadow:0 1px 1px rgba(0,0,0,.15)"></div>
<svg class="a" style="left:819px;top:787px" width="14" height="17" viewBox="0 0 14 17"><rect x="1.5" y="1" width="3" height="15" fill="#2a78d6"/><path d="M12 1V16L5 8.5Z" fill="#2a78d6"/></svg>
<svg class="a" style="left:843px;top:787px" width="14" height="17" viewBox="0 0 14 17"><path d="M11 1V16L3 8.5Z" fill="#2a78d6"/></svg>
<svg class="a" style="left:969px;top:787px" width="14" height="17" viewBox="0 0 14 17"><path d="M3 1V16L11 8.5Z" fill="#2a78d6"/></svg>
<svg class="a" style="left:994px;top:787px" width="14" height="17" viewBox="0 0 14 17"><rect x="9.5" y="1" width="3" height="15" fill="#2a78d6"/><path d="M2 1V16L9 8.5Z" fill="#2a78d6"/></svg>
<div class="a" style="left:865px;top:787px;font-size:15px;font-weight:bold;color:#2a78d6;white-space:nowrap">de 1 à 1 sur 1</div>
<div class="a" style="left:1344px;top:777px;width:51px;height:35px;border-radius:3px;background:#e6e6e6;box-shadow:0 1px 2px rgba(0,0,0,.2)"><svg class="a" style="left:12px;top:4px" width="28" height="28" viewBox="0 0 28 28"><path d="M7 3H27L20 13V24L15 26V13Z" fill="#666" stroke="#555"/><path d="M9 4H25L19 11" fill="#ddd"/><circle cx="7" cy="8" r="6" fill="#4a4a4a"/><text x="7" y="11.5" text-anchor="middle" font-family="Liberation Sans" font-weight="bold" font-size="9" fill="#fff">A</text><circle cx="7" cy="20" r="6" fill="#4a4a4a"/><text x="7" y="23.5" text-anchor="middle" font-family="Liberation Sans" font-weight="bold" font-size="9" fill="#fff">Z</text></svg></div>
<div class="a" style="left:1398px;top:777px;width:51px;height:35px;border-radius:3px;background:#e6e6e6;box-shadow:0 1px 2px rgba(0,0,0,.2)"><svg class="a" style="left:12px;top:4px" width="28" height="28" viewBox="0 0 28 28"><rect x="4" y="2" width="16" height="21" fill="#fff" stroke="#666" stroke-width="1.5"/><path d="M7 6H17M7 9.5H17M7 13H13" stroke="#888" stroke-width="1.2"/><circle cx="19" cy="20" r="7" fill="#555"/><path d="M19 15.5V24.5M14.5 20H23.5" stroke="#fff" stroke-width="2.6"/></svg></div>
<div class="a" style="left:1452px;top:777px;width:51px;height:35px;border-radius:3px;background:#e6e6e6;box-shadow:0 1px 2px rgba(0,0,0,.2)"><svg class="a" style="left:11px;top:3px" width="28" height="28" viewBox="0 0 28 28"><path d="M4 7H24" stroke="#555" stroke-width="3"/><rect x="11" y="2" width="6" height="4" fill="none" stroke="#555" stroke-width="2"/><path d="M6 9H22L20 26H8Z" fill="#6a6a6a"/><path d="M10.5 13L17.5 21M17.5 13L10.5 21" stroke="#fff" stroke-width="2.2"/></svg></div>
<div class="a" style="left:1506px;top:777px;width:51px;height:35px;border-radius:3px;background:#e6e6e6;box-shadow:0 1px 2px rgba(0,0,0,.2)"><svg class="a" style="left:12px;top:4px" width="28" height="28" viewBox="0 0 28 28"><path d="M12 2H25L18 11H24L5 26L11 14H4Z" fill="#8a8a8a" stroke="#777" stroke-linejoin="round"/></svg></div>
<div class="a" style="left:342px;top:817px;width:1214px;height:25px;background:#3a85d6"></div>
<div class="a" style="left:371px;top:817px;width:1.5px;height:25px;background:#eef4fb"></div>
<div class="a" style="left:500px;top:817px;width:1.5px;height:25px;background:#eef4fb"></div>
<div class="a" style="left:959px;top:817px;width:1.5px;height:25px;background:#eef4fb"></div>
<div class="a" style="left:1092px;top:817px;width:1.5px;height:25px;background:#eef4fb"></div>
<div class="a" style="left:1233px;top:817px;width:1.5px;height:25px;background:#eef4fb"></div>
<div class="a" style="left:1375px;top:817px;width:1.5px;height:25px;background:#eef4fb"></div>
<div class="a" style="left:1516px;top:817px;width:1.5px;height:25px;background:#eef4fb"></div>
<div class="a" style="left:347px;top:819px;width:20px;height:21px;background:#c8d4e4;border:1px solid #8aa0bc"></div>
<div class="a" style="left:349px;top:821px;width:16px;height:17px;background:#fff;border:2px solid;border-color:#1a1a1a #d8d8d8 #d8d8d8 #1a1a1a"></div>
<div class="a" style="left:373px;top:821px;width:127px;text-align:center;font-size:15px;font-weight:bold;color:#fff;white-space:nowrap">Intervenant</div>
<div class="a" style="left:502px;top:821px;width:457px;text-align:center;font-size:15px;font-weight:bold;color:#fff;white-space:nowrap">Nom</div>
<div class="a" style="left:961px;top:821px;width:131px;text-align:center;font-size:15px;font-weight:bold;color:#fff;white-space:nowrap">Date</div>
<div class="a" style="left:1094px;top:821px;width:139px;text-align:center;font-size:15px;font-weight:bold;color:#fff;white-space:nowrap">Temps</div>
<div class="a" style="left:1235px;top:821px;width:140px;text-align:center;font-size:15px;font-weight:bold;color:#fff;white-space:nowrap">Type d'horaire</div>
<div class="a" style="left:1377px;top:821px;width:139px;text-align:center;font-size:15px;font-weight:bold;color:#fff;white-space:nowrap">Opération</div>
<div class="a" style="left:342px;top:842px;width:1214px;height:25px;background:#e8e8e8"></div>
<div class="a" style="left:342px;top:867px;width:1214px;height:27px;background:#f8f8f8"></div>
<div class="a" style="left:342px;top:894px;width:1214px;height:25px;background:#e8e8e8"></div>
<div class="a" style="left:342px;top:919px;width:1214px;height:27px;background:#f8f8f8"></div>
<div class="a" style="left:342px;top:946px;width:1214px;height:26px;background:#e8e8e8"></div>
<div class="a" style="left:371px;top:842px;width:1.5px;height:130px;background:#fff"></div>
<div class="a" style="left:500px;top:842px;width:1.5px;height:130px;background:#fff"></div>
<div class="a" style="left:959px;top:842px;width:1.5px;height:130px;background:#fff"></div>
<div class="a" style="left:1092px;top:842px;width:1.5px;height:130px;background:#fff"></div>
<div class="a" style="left:1233px;top:842px;width:1.5px;height:130px;background:#fff"></div>
<div class="a" style="left:1375px;top:842px;width:1.5px;height:130px;background:#fff"></div>
<div class="a" style="left:1516px;top:842px;width:1.5px;height:130px;background:#fff"></div>
<div class="a" style="left:342px;top:866px;width:1214px;height:1px;background:#fff"></div>
<div class="a" style="left:342px;top:893px;width:1214px;height:1px;background:#fff"></div>
<div class="a" style="left:342px;top:918px;width:1214px;height:1px;background:#fff"></div>
<div class="a" style="left:342px;top:945px;width:1214px;height:1px;background:#fff"></div>
<div class="a" style="left:342px;top:972px;width:1214px;height:1px;background:#fff"></div>
<div class="a" style="left:349px;top:847px;width:17px;height:17px;background:#fff;border:1px solid #555"></div>
<div class="a" style="left:375px;top:847px;font-size:14.5px;color:#626262;white-space:nowrap">EXT-BLHOSTE</div>
<div class="a" style="left:504px;top:847px;font-size:14.5px;color:#626262;white-space:nowrap">L'hoste, Bertrand</div>
<div class="a" style="left:963px;top:847px;font-size:14.5px;color:#626262;white-space:nowrap">02/06/2020 22:0…</div>
<div class="a" style="right:687px;top:847px;font-size:14.5px;color:#626262;white-space:nowrap">00:30</div>
<div class="a" style="left:1237px;top:847px;font-size:14.5px;color:#626262;white-space:nowrap">AI-CT-H-NDJF</div>
<svg class="a" style="left:1517px;top:843px" width="24" height="24" viewBox="0 0 24 24"><path d="M5 16L17 3Q19 1.5 21 3.2Q22.8 5 21 7L8 19.5Z" fill="#3a3a3a"/><path d="M5 16L8 19.5L2 22Z" fill="#666"/><path d="M16 4.5L19.5 8" stroke="#888" stroke-width="1"/></svg>
<!-- /OCC -->
<!-- scrollbar -->
<div class="a" style="left:1898px;top:94px;width:22px;height:938px;background:#dcdcdc;border-left:1px solid #a0a0a0"></div>
<div class="a" style="left:1899px;top:94px;width:21px;height:19px;background:#fff;border-bottom:1px solid #e8e8e8"></div>
<div class="a" style="left:1900px;top:114px;width:1px;height:848px;background:#ececec"></div>
<svg class="a" style="left:1903px;top:98px" width="14" height="12" viewBox="0 0 14 12"><path d="M2 8L7 3L12 8" fill="none" stroke="#505050" stroke-width="1.3"/></svg>


<!-- scrollbar lower -->
<div class="a" style="left:1899px;top:962px;width:21px;height:70px;background:#fff"></div>
<div class="a" style="left:1899px;top:962px;width:21px;height:1px;background:#cfcfcf"></div>
<div class="a" style="left:1899px;top:1012px;width:21px;height:1px;background:#e4e4e4"></div>
<svg class="a" style="left:1903px;top:1014px" width="14" height="12" viewBox="0 0 14 12"><path d="M2 3L7 8L12 3" fill="none" stroke="#505050" stroke-width="1.3"/></svg>
<svg class="a" style="left:1904px;top:531px" width="12" height="14" viewBox="0 0 12 14"><path d="M1.5 3H10.5M1.5 7H10.5M1.5 11H10.5" stroke="#606060" stroke-width="2"/></svg>
<!-- taskbar -->
<div class="a" style="left:0;top:1032px;width:1920px;height:48px;background:#68c8ea;border-top:1px solid #2f6b82"></div>
<div class="a" style="left:61px;top:1033px;width:1px;height:47px;background:#3d8aa6"></div>
<div class="a" style="left:132px;top:1033px;width:1px;height:47px;background:#3d8aa6"></div>
<div class="a" style="left:135px;top:1033px;width:72px;height:47px;background:#a9def2;border:1px solid #4a8fa8;border-top:none"></div>
<svg class="a" style="left:13px;top:1039px" width="35" height="35" viewBox="0 0 35 35"><path d="M1 5L15 3V16H1Z M17 2.7L34 0.5V16H17Z M1 18H15V31L1 29Z M17 18H34V34.5L17 32.3Z" fill="#fff"/></svg>
<svg class="a" style="left:76px;top:1036px" width="40" height="40" viewBox="0 0 40 40"><defs><linearGradient id="ap" x1="0" y1="0" x2="0" y2="1"><stop offset="0" stop-color="#5a7ad0"/><stop offset="1" stop-color="#24378a"/></linearGradient></defs><rect x="2" y="2" width="36" height="36" rx="5" fill="url(#ap)"/><rect x="9" y="7" width="13" height="24" fill="#dfe6f4" stroke="#9aaad8"/><path d="M11 11H13M15 11H17M11 15H13M15 15H17M11 19H13M15 19H17M11 23H13M15 23H17" stroke="#3a4a9a" stroke-width="1.6"/><circle cx="26" cy="16" r="4" fill="#fff"/><path d="M18.5 33V26Q18.5 21 26 21Q33.5 21 33.5 26V33Z" fill="#fff"/></svg>
<svg class="a" style="left:151px;top:1037px" width="38" height="38" viewBox="0 0 38 38"><defs><radialGradient id="ffo" cx="0.3" cy="0.8" r="0.9"><stop offset="0" stop-color="#ffd23a"/><stop offset="0.4" stop-color="#ff7a1a"/><stop offset="1" stop-color="#e8263a"/></radialGradient><radialGradient id="ffb" cx="0.6" cy="0.3" r="0.7"><stop offset="0" stop-color="#3ad0ff"/><stop offset="1" stop-color="#3a3ab8"/></radialGradient></defs><circle cx="19" cy="20" r="17" fill="url(#ffo)"/><circle cx="21" cy="17" r="10" fill="url(#ffb)"/><path d="M28 2Q36 10 34 20Q30 30 20 31Q12 31 8 26Q16 30 23 25Q30 19 28 10Z" fill="#ff9a1a"/><path d="M14 12Q20 10 22 16Q18 14 15 17Z" fill="#ff8a2a"/><path d="M26 2L31 7Q28 6 26 2Z" fill="#ffcf3a"/></svg>
<div class="a" style="left:1876px;top:1048px;font-size:15.5px;color:#10222a">FRA</div>

</body></html>
